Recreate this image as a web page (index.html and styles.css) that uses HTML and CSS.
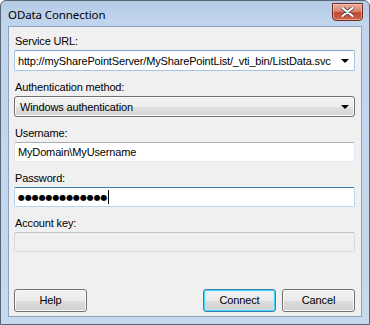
FILE: index.html
```html
<!DOCTYPE html>
<html>
  <head>
    <meta charset="utf-8">
    <title>OData Connection</title>
    <link rel="stylesheet" href="styles.css">
  </head>
  <body>
    <div class="window">
      <div class="titlebar">
        <span class="title">OData Connection</span>
        <div class="close">
          <svg width="13" height="10" viewBox="0 0 13 10">
            <path d="M1.5 1 L11.5 9 M11.5 1 L1.5 9" stroke="#4a4a4a" stroke-width="3.6" stroke-linecap="round"/>
            <path d="M1.5 1 L11.5 9 M11.5 1 L1.5 9" stroke="#fff" stroke-width="2.2" stroke-linecap="round"/>
          </svg>
        </div>
      </div>
      <div class="client">
        <div class="field">
          <div class="label">Service URL:</div>
          <div class="box combo">
            <span class="value">http://mySharePointServer/MySharePointList/_vti_bin/ListData.svc</span>
            <span class="arrow"></span>
          </div>
        </div>
        <div class="field">
          <div class="label">Authentication method:</div>
          <div class="box select">
            <span class="value">Windows authentication</span>
            <span class="arrow"></span>
          </div>
        </div>
        <div class="field">
          <div class="label">Username:</div>
          <div class="box text">
            <span class="value">MyDomain\MyUsername</span>
          </div>
        </div>
        <div class="field">
          <div class="label">Password:</div>
          <div class="box text focused">
            <span class="dots">●●●●●●●●●●●●●</span><span class="caret"></span>
          </div>
        </div>
        <div class="field">
          <div class="label">Account key:</div>
          <div class="box text disabled"></div>
        </div>
        <div class="buttons">
          <div class="button">Help</div>
          <div class="spacer"></div>
          <div class="button default">Connect</div>
          <div class="button">Cancel</div>
        </div>
      </div>
    </div>
  </body>
</html>
```

FILE: styles.css
```css
* {
  margin: 0;
  padding: 0;
  box-sizing: border-box;
}
html, body {
  width: 370px;
  height: 325px;
  overflow: hidden;
}
body {
  font-family: "Liberation Sans", Arial, sans-serif;
  font-size: 11px;
  letter-spacing: -0.15px;
  color: #000;
  background: #fff;
}
.window {
  width: 370px;
  height: 325px;
  display: flex;
  flex-direction: column;
  border: 1px solid #5a6675;
  border-radius: 6px 6px 0 0;
  background: linear-gradient(to bottom, #b4cbe6 0px, #c0d4ec 20px, #c6d9ee 100%);
  padding: 0 7px 7px 7px;
}
.titlebar {
  height: 25px;
  display: flex;
  align-items: center;
  justify-content: space-between;
}
.title {
  font-family: "Noto Sans", "Open Sans", sans-serif;
  font-size: 11.5px;
  letter-spacing: -0.1px;
  color: #000;
  padding-top: 1px;
}
.close {
  width: 31px;
  height: 18px;
  margin-top: -3px;
  margin-right: -1px;
  border: 1px solid #6e2e22;
  border-radius: 0 0 4px 4px;
  background: linear-gradient(to bottom, #e9a99b 0%, #d88471 45%, #c5452c 55%, #d0654b 100%);
  display: flex;
  align-items: center;
  justify-content: center;
  box-shadow: inset 0 0 0 1px rgba(255, 220, 210, 0.5);
}
.client {
  flex: 1;
  background: #f0f0f0;
  border: 1px solid #8ba3bf;
  padding: 6px 6px 0 5px;
  display: flex;
  flex-direction: column;
}
.field {
  margin-bottom: 8px;
}
.label {
  height: 16px;
  line-height: 16px;
  margin-bottom: 1px;
  padding-left: 1px;
}
.box {
  position: relative;
  height: 20px;
  display: flex;
  align-items: center;
  padding-left: 3px;
  background: #fff;
  border: 1px solid #e2e6ec;
  border-top-color: #abadb3;
  border-radius: 2px;
}
.combo {
  height: 21px;
  border-color: #a7c4e2;
  border-top-color: #7da2ce;
}
.select {
  height: 21px;
  padding-left: 5px;
  border: 1px solid #707070;
  border-radius: 3px;
  background: linear-gradient(to bottom, #f4f4f4 0%, #ededed 50%, #e0e0e0 51%, #d4d4d4 100%);
  box-shadow: inset 0 0 0 1px #fcfcfc;
}
.arrow {
  position: absolute;
  right: 5px;
  top: 8px;
  width: 0;
  height: 0;
  border-left: 4px solid transparent;
  border-right: 4px solid transparent;
  border-top: 4px solid #000;
}
.focused {
  border-color: #b5d6ee;
  border-top-color: #3d7bad;
}
.dots {
  font-family: "DejaVu Sans", sans-serif;
  font-size: 8px;
  letter-spacing: -0.1px;
}
.caret {
  width: 1px;
  height: 14px;
  background: #000;
  margin-left: 1px;
}
.disabled {
  background: #f0f0f0;
  border-color: #d9d9d9;
  border-top-color: #bfc1c5;
}
.buttons {
  margin-top: 29px;
  display: flex;
  gap: 6px;
}
.spacer {
  flex: 1;
}
.button {
  width: 73px;
  height: 23px;
  line-height: 21px;
  text-align: center;
  border: 1px solid #707070;
  border-radius: 3px;
  background: linear-gradient(to bottom, #f2f2f2 0%, #ebebeb 50%, #dddddd 51%, #cfcfcf 100%);
  box-shadow: inset 0 0 0 1px #fcfcfc;
}
.default {
  border-color: #3c7fb1;
  box-shadow: inset 0 0 0 1px #48d3f8, inset 0 0 0 2px rgba(190, 235, 250, 0.6);
}
```
